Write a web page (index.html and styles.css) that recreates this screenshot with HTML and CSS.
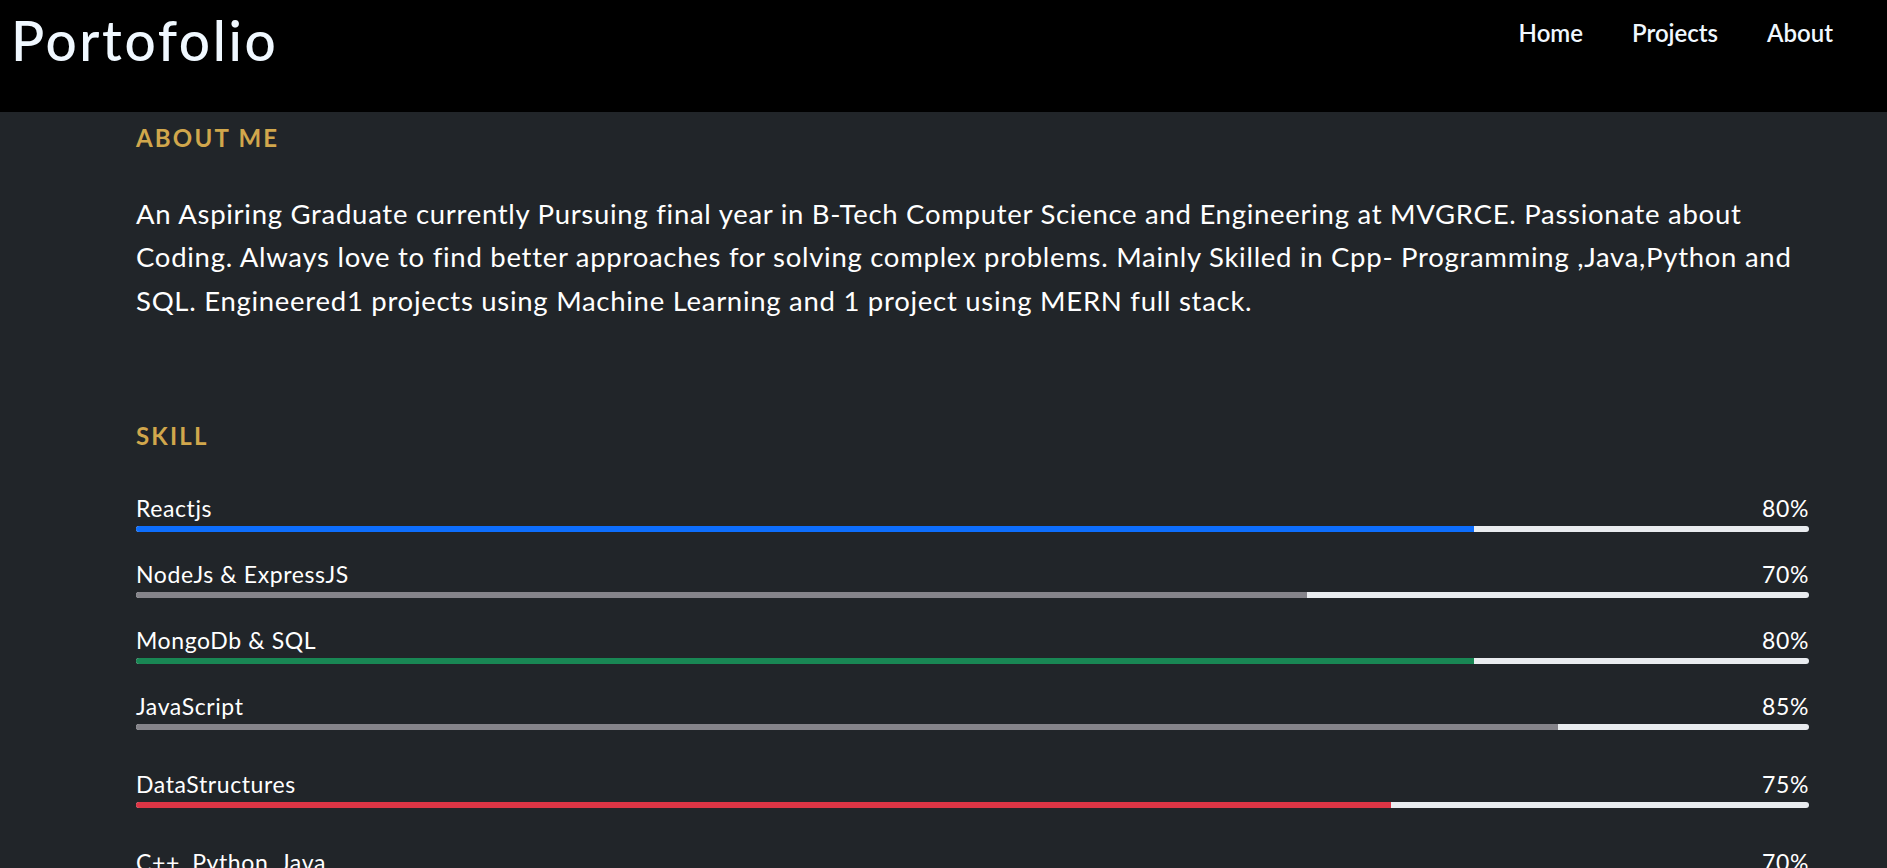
FILE: index.html
```html
<!DOCTYPE html>
<html lang="en">
<head>
<meta charset="utf-8">
<title>Portofolio</title>
<link rel="stylesheet" href="styles.css">
</head>
<body>
<header class="topbar">
  <div class="brand">Portofolio</div>
  <nav class="nav">
    <a class="nav-link" href="#">Home</a>
    <a class="nav-link" href="#">Projects</a>
    <a class="nav-link" href="#">About</a>
  </nav>
</header>
<main class="content">
  <section class="about">
    <h2 class="section-title">ABOUT ME</h2>
    <p class="about-text">An Aspiring Graduate currently Pursuing final year in B-Tech Computer Science and Engineering at MVGRCE. Passionate about Coding. Always love to find better approaches for solving complex problems. Mainly Skilled in Cpp- Programming ,Java,Python and SQL. Engineered1 projects using Machine Learning and 1 project using MERN full stack.</p>
  </section>
  <section class="skills">
    <h2 class="section-title">SKILL</h2>
    <div class="skill-list">
      <div class="skill">
        <div class="skill-head"><span>Reactjs</span><span>80%</span></div>
        <div class="track"><div class="fill fill-blue" style="width:80%"></div></div>
      </div>
      <div class="skill">
        <div class="skill-head"><span>NodeJs &amp; ExpressJS</span><span>70%</span></div>
        <div class="track"><div class="fill fill-gray" style="width:70%"></div></div>
      </div>
      <div class="skill">
        <div class="skill-head"><span>MongoDb &amp; SQL</span><span>80%</span></div>
        <div class="track"><div class="fill fill-green" style="width:80%"></div></div>
      </div>
      <div class="skill">
        <div class="skill-head"><span>JavaScript</span><span>85%</span></div>
        <div class="track"><div class="fill fill-gray" style="width:85%"></div></div>
      </div>
      <div class="skill skill-spaced">
        <div class="skill-head"><span>DataStructures</span><span>75%</span></div>
        <div class="track"><div class="fill fill-red" style="width:75%"></div></div>
      </div>
      <div class="skill skill-spaced">
        <div class="skill-head"><span>C++, Python, Java</span><span>70%</span></div>
        <div class="track"><div class="fill fill-blue" style="width:70%"></div></div>
      </div>
    </div>
  </section>
</main>
</body>
</html>
```

FILE: styles.css
```css
body {
  margin: 0;
  background: #212529;
  color: #f8f9fa;
  font-family: "Lato", "Open Sans", sans-serif;
}

.topbar {
  height: 112px;
  background: #000;
  display: flex;
  justify-content: space-between;
  align-items: flex-start;
}

.brand {
  padding: 5px 0 0 11px;
  font-size: 55px;
  line-height: 70px;
  font-weight: 500;
  color: #f0f8ff;
  letter-spacing: 2.6px;
}

.nav {
  display: flex;
  gap: 49px;
  padding: 18px 54px 0 0;
}

.nav-link {
  color: #f0f8ff;
  text-decoration: none;
  font-size: 24px;
  line-height: 30px;
  font-weight: 600;
}

.content {
  padding: 11px 78px 40px 136px;
}

.section-title {
  margin: 0;
  font-size: 24px;
  line-height: 30px;
  font-weight: 700;
  letter-spacing: 2.2px;
  color: #d1a74c;
}

.about-text {
  margin: 39px -12px 0 0;
  font-size: 27.5px;
  line-height: 43.4px;
  letter-spacing: 0.72px;
  color: #fff;
}

.skills {
  margin-top: 99px;
}

.skill-list {
  margin-top: 42px;
  display: flex;
  flex-direction: column;
  gap: 27px;
}

.skill-spaced {
  margin-top: 12px;
}

.skill-head {
  display: flex;
  justify-content: space-between;
  font-size: 23px;
  line-height: 30px;
  letter-spacing: 0.6px;
  margin-bottom: 3px;
  color: #fff;
}

.track {
  height: 6px;
  background: #e9ecef;
  border-radius: 3px;
  overflow: hidden;
}

.fill {
  height: 100%;
}

.fill-blue { background: #0d6efd; }
.fill-gray { background: #85848a; }
.fill-green { background: #198754; }
.fill-red { background: #dc3545; }
```
